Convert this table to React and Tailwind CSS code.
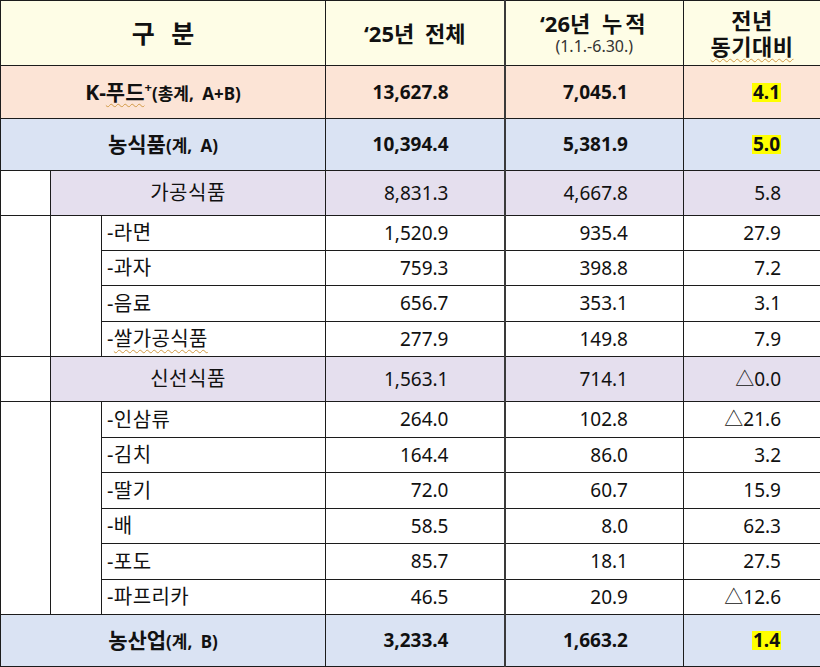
import React from "react";

const spell =
  "underline decoration-wavy decoration-[#d19a45] decoration-1 underline-offset-[3px]";

const Num = ({ v, last, bold, hl, bg = "" }) => (
  <td
    className={`border border-[#1c1c1c] text-right ${last ? "pr-[39px]" : "pr-[55px]"} ${
      bold ? "font-bold" : ""
    } ${bg}`}
  >
    {hl ? <span className="bg-[#ffff00] inline-block leading-[19px] px-[1px]">{v}</span> : v}
  </td>
);

const Item = ({ label, a, b, c, spellcheck, h = "h-[35px]" }) => (
  <tr className={h}>
    <td className="border border-[#1c1c1c] pl-[5px] text-left text-[20px] tracking-[0.4px]">
      {spellcheck ? (
        <>
          -<span className={spell}>{label}</span>
        </>
      ) : (
        `-${label}`
      )}
    </td>
    <Num v={a} />
    <td className="border border-[#1c1c1c] border-l-2 border-l-[#3a3a3a] text-right pr-[55px]">{b}</td>
    <Num v={c} last />
  </tr>
);

const Total = ({ children, a, b, c, bg, h }) => (
  <tr className={`${h} ${bg}`}>
    <td colSpan={3} className="border border-[#1c1c1c] text-center font-bold [word-spacing:4px]">
      {children}
    </td>
    <Num v={a} bold />
    <td className="border border-[#1c1c1c] border-l-2 border-l-[#3a3a3a] text-right pr-[55px] font-bold">{b}</td>
    <Num v={c} bold hl last />
  </tr>
);

const Group = ({ label, a, b, c }) => (
  <tr className="h-[45px]">
    <td className="border border-[#1c1c1c] bg-white" />
    <td colSpan={2} className="border border-[#1c1c1c] bg-[#e5dfee] text-center text-[20px] tracking-[0.5px]">
      {label}
    </td>
    <Num v={a} bg="bg-[#e5dfee]" />
    <td className="border border-[#1c1c1c] border-l-2 border-l-[#3a3a3a] bg-[#e5dfee] text-right pr-[55px]">{b}</td>
    <Num v={c} last bg="bg-[#e5dfee]" />
  </tr>
);

export default function App() {
  return (
    <div className="w-[820px] h-[667px] bg-white overflow-hidden">
      <table className="w-[820px] table-fixed border-collapse text-[19px] text-[#111] leading-none font-['Noto_Sans','Noto_Sans_CJK_KR',sans-serif]">
        <colgroup>
          <col className="w-[50px]" />
          <col className="w-[51px]" />
          <col className="w-[224px]" />
          <col className="w-[179px]" />
          <col className="w-[179px]" />
          <col className="w-[137px]" />
        </colgroup>
        <tbody>
          <tr className="h-[65px] bg-[#fefde6]">
            <td colSpan={3} className="border border-[#1c1c1c] text-center font-bold text-[25px] [word-spacing:10px]">
              구 분
            </td>
            <td className="border border-[#1c1c1c] text-center font-bold text-[22px] [word-spacing:5px]">
              ‘25년 전체
            </td>
            <td className="border border-[#1c1c1c] border-l-2 border-l-[#3a3a3a] text-center">
              <div className="font-bold text-[22px] leading-[26px] [word-spacing:6px]">
                ‘26년 <span className="tracking-[3px]">누적</span>
              </div>
              <div className="text-[16px] leading-[20px] text-[#333]">(1.1.-6.30.)</div>
            </td>
            <td className="border border-[#1c1c1c] text-center font-bold text-[22px] leading-[26px] tracking-[0.5px]">
              <div>전년</div>
              <div>
                <span className={spell}>동기대비</span>
              </div>
            </td>
          </tr>
          <Total h="h-[53px]" bg="bg-[#fce4d6]" a="13,627.8" b="7,045.1" c="4.1">
            <span className="text-[21px]">
              K-<span className={spell}>푸드</span>
            </span>
            <span className="text-[13px] relative -top-[8px]">+</span>
            <span className="text-[17px]">(총계, A+B)</span>
          </Total>
          <Total h="h-[52px]" bg="bg-[#dae3f3]" a="10,394.4" b="5,381.9" c="5.0">
            <span className="text-[21px]">농식품</span>
            <span className="text-[17px]">(계, A)</span>
          </Total>
          <Group label="가공식품" a="8,831.3" b="4,667.8" c="5.8" />
          <tr className="h-[35px]">
            <td rowSpan={4} className="border border-[#1c1c1c]" />
            <td rowSpan={4} className="border border-[#1c1c1c]" />
            <td className="border border-[#1c1c1c] pl-[5px] text-left text-[20px] tracking-[0.4px]">-라면</td>
            <Num v="1,520.9" />
            <td className="border border-[#1c1c1c] border-l-2 border-l-[#3a3a3a] text-right pr-[55px]">935.4</td>
            <Num v="27.9" last />
          </tr>
          <Item label="과자" a="759.3" b="398.8" c="7.2" />
          <Item label="음료" a="656.7" b="353.1" c="3.1" h="h-[36px]" />
          <Item label="쌀가공식품" a="277.9" b="149.8" c="7.9" spellcheck />
          <Group label="신선식품" a="1,563.1" b="714.1" c="△0.0" />
          <tr className="h-[36px]">
            <td rowSpan={6} className="border border-[#1c1c1c]" />
            <td rowSpan={6} className="border border-[#1c1c1c]" />
            <td className="border border-[#1c1c1c] pl-[5px] text-left text-[20px] tracking-[0.4px]">-인삼류</td>
            <Num v="264.0" />
            <td className="border border-[#1c1c1c] border-l-2 border-l-[#3a3a3a] text-right pr-[55px]">102.8</td>
            <Num v="△21.6" last />
          </tr>
          <Item label="김치" a="164.4" b="86.0" c="3.2" />
          <Item label="딸기" a="72.0" b="60.7" c="15.9" h="h-[36px]" />
          <Item label="배" a="58.5" b="8.0" c="62.3" />
          <Item label="포도" a="85.7" b="18.1" c="27.5" h="h-[36px]" />
          <Item label="파프리카" a="46.5" b="20.9" c="△12.6" />
          <Total h="h-[52px]" bg="bg-[#dae3f3]" a="3,233.4" b="1,663.2" c="1.4">
            <span className="text-[21px]">농산업</span>
            <span className="text-[17px]">(계, B)</span>
          </Total>
        </tbody>
      </table>
    </div>
  );
}
